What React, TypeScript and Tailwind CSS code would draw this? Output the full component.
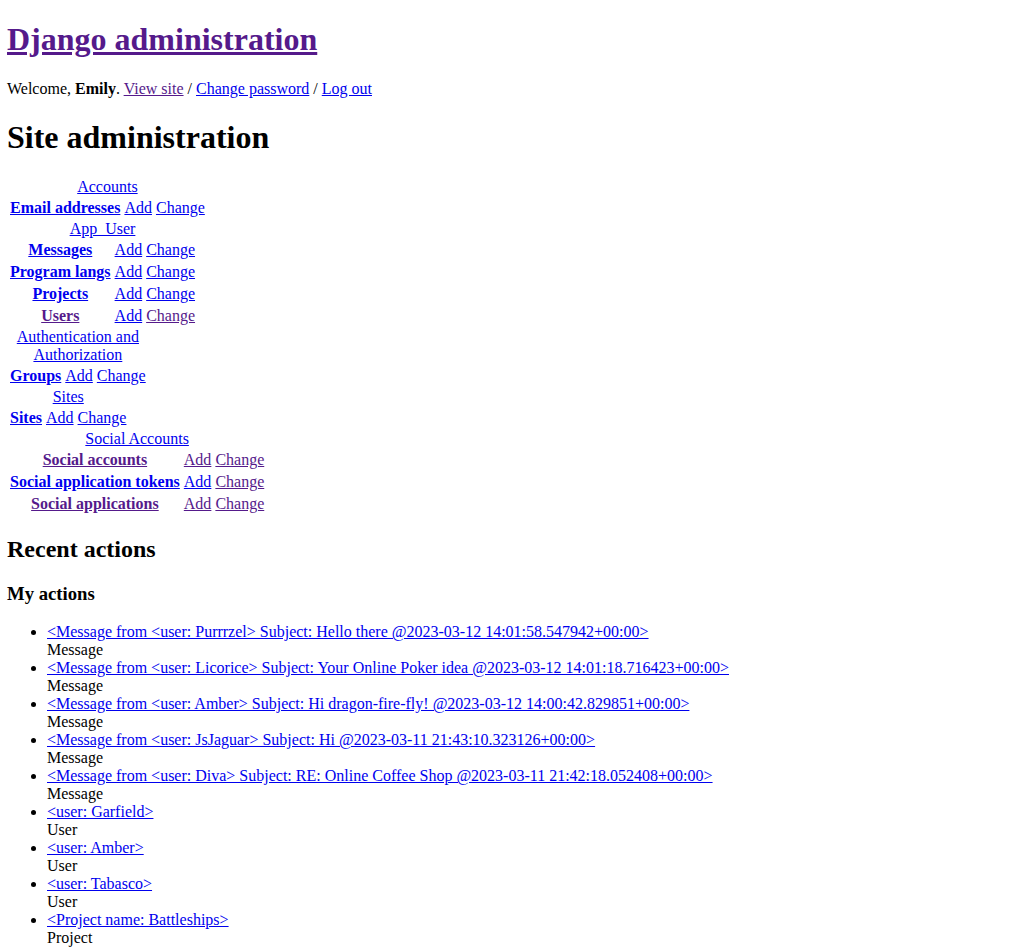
import React from "react"

const BLUE = "text-[#0000ee] underline"
const PURPLE = "text-[#551a8b] underline"

type Model = { name: string; seen?: boolean; addSeen?: boolean; changeSeen?: boolean }
type AppGroup = { name: string; models: Model[] }

const apps: AppGroup[] = [
  { name: "Accounts", models: [{ name: "Email addresses" }] },
  {
    name: "App_User",
    models: [
      { name: "Messages" },
      { name: "Program langs" },
      { name: "Projects" },
      { name: "Users", seen: true, changeSeen: true },
    ],
  },
  { name: "Authentication and Authorization", models: [{ name: "Groups" }] },
  { name: "Sites", models: [{ name: "Sites" }] },
  {
    name: "Social Accounts",
    models: [
      { name: "Social accounts", seen: true, addSeen: true, changeSeen: true },
      { name: "Social application tokens", changeSeen: true },
      { name: "Social applications", seen: true, addSeen: true, changeSeen: true },
    ],
  },
]

const actions = [
  { label: "<Message from <user: Purrrzel> Subject: Hello there @2023-03-12 14:01:58.547942+00:00>", type: "Message" },
  { label: "<Message from <user: Licorice> Subject: Your Online Poker idea @2023-03-12 14:01:18.716423+00:00>", type: "Message" },
  { label: "<Message from <user: Amber> Subject: Hi dragon-fire-fly! @2023-03-12 14:00:42.829851+00:00>", type: "Message" },
  { label: "<Message from <user: JsJaguar> Subject: Hi @2023-03-11 21:43:10.323126+00:00>", type: "Message" },
  { label: "<Message from <user: Diva> Subject: RE: Online Coffee Shop @2023-03-11 21:42:18.052408+00:00>", type: "Message" },
  { label: "<user: Garfield>", type: "User" },
  { label: "<user: Amber>", type: "User" },
  { label: "<user: Tabasco>", type: "User" },
  { label: "<Project name: Battleships>", type: "Project" },
]

export default function App() {
  return (
    <div className="min-h-[948px] bg-white px-[7px] text-[16px] leading-[normal] text-black font-['Liberation_Serif','Times_New_Roman',serif]">
      {/* header */}
      <div>
        <h1 className="my-[21.44px] text-[32px] font-bold">
          <a href="#" className={PURPLE}>Django administration</a>
        </h1>
        <div>
          Welcome, <strong className="font-bold">Emily</strong>.{" "}
          <a href="#" className={PURPLE}>View site</a> /{" "}
          <a href="#" className={BLUE}>Change password</a> /{" "}
          <a href="#" className={BLUE}>Log out</a>
        </div>
      </div>

      <div>
        <h1 className="my-[21.44px] text-[32px] font-bold">Site administration</h1>

        <div>
          {apps.map((app) => (
            <div key={app.name}>
              <table className="border-separate border-spacing-[2px]">
                <caption className="text-center">
                  <a href="#" className={BLUE}>{app.name}</a>
                </caption>
                <tbody>
                  {app.models.map((m) => (
                    <tr key={m.name}>
                      <th scope="row" className="p-px text-center font-bold align-middle">
                        <a href="#" className={m.seen ? PURPLE : BLUE}>{m.name}</a>
                      </th>
                      <td className="p-px align-middle">
                        <a href="#" className={m.addSeen ? PURPLE : BLUE}>Add</a>
                      </td>
                      <td className="p-px align-middle">
                        <a href="#" className={m.changeSeen ? PURPLE : BLUE}>Change</a>
                      </td>
                    </tr>
                  ))}
                </tbody>
              </table>
            </div>
          ))}
        </div>

        <div>
          <h2 className="my-[19.92px] text-[24px] font-bold">Recent actions</h2>
          <h3 className="my-[18.72px] text-[18.72px] font-bold">My actions</h3>
          <ul className="my-4 list-disc pl-10">
            {actions.map((a, i) => (
              <li key={i}>
                <a href="#" className={BLUE}>{a.label}</a>
                <br />
                <span>{a.type}</span>
              </li>
            ))}
          </ul>
        </div>
      </div>
    </div>
  )
}
